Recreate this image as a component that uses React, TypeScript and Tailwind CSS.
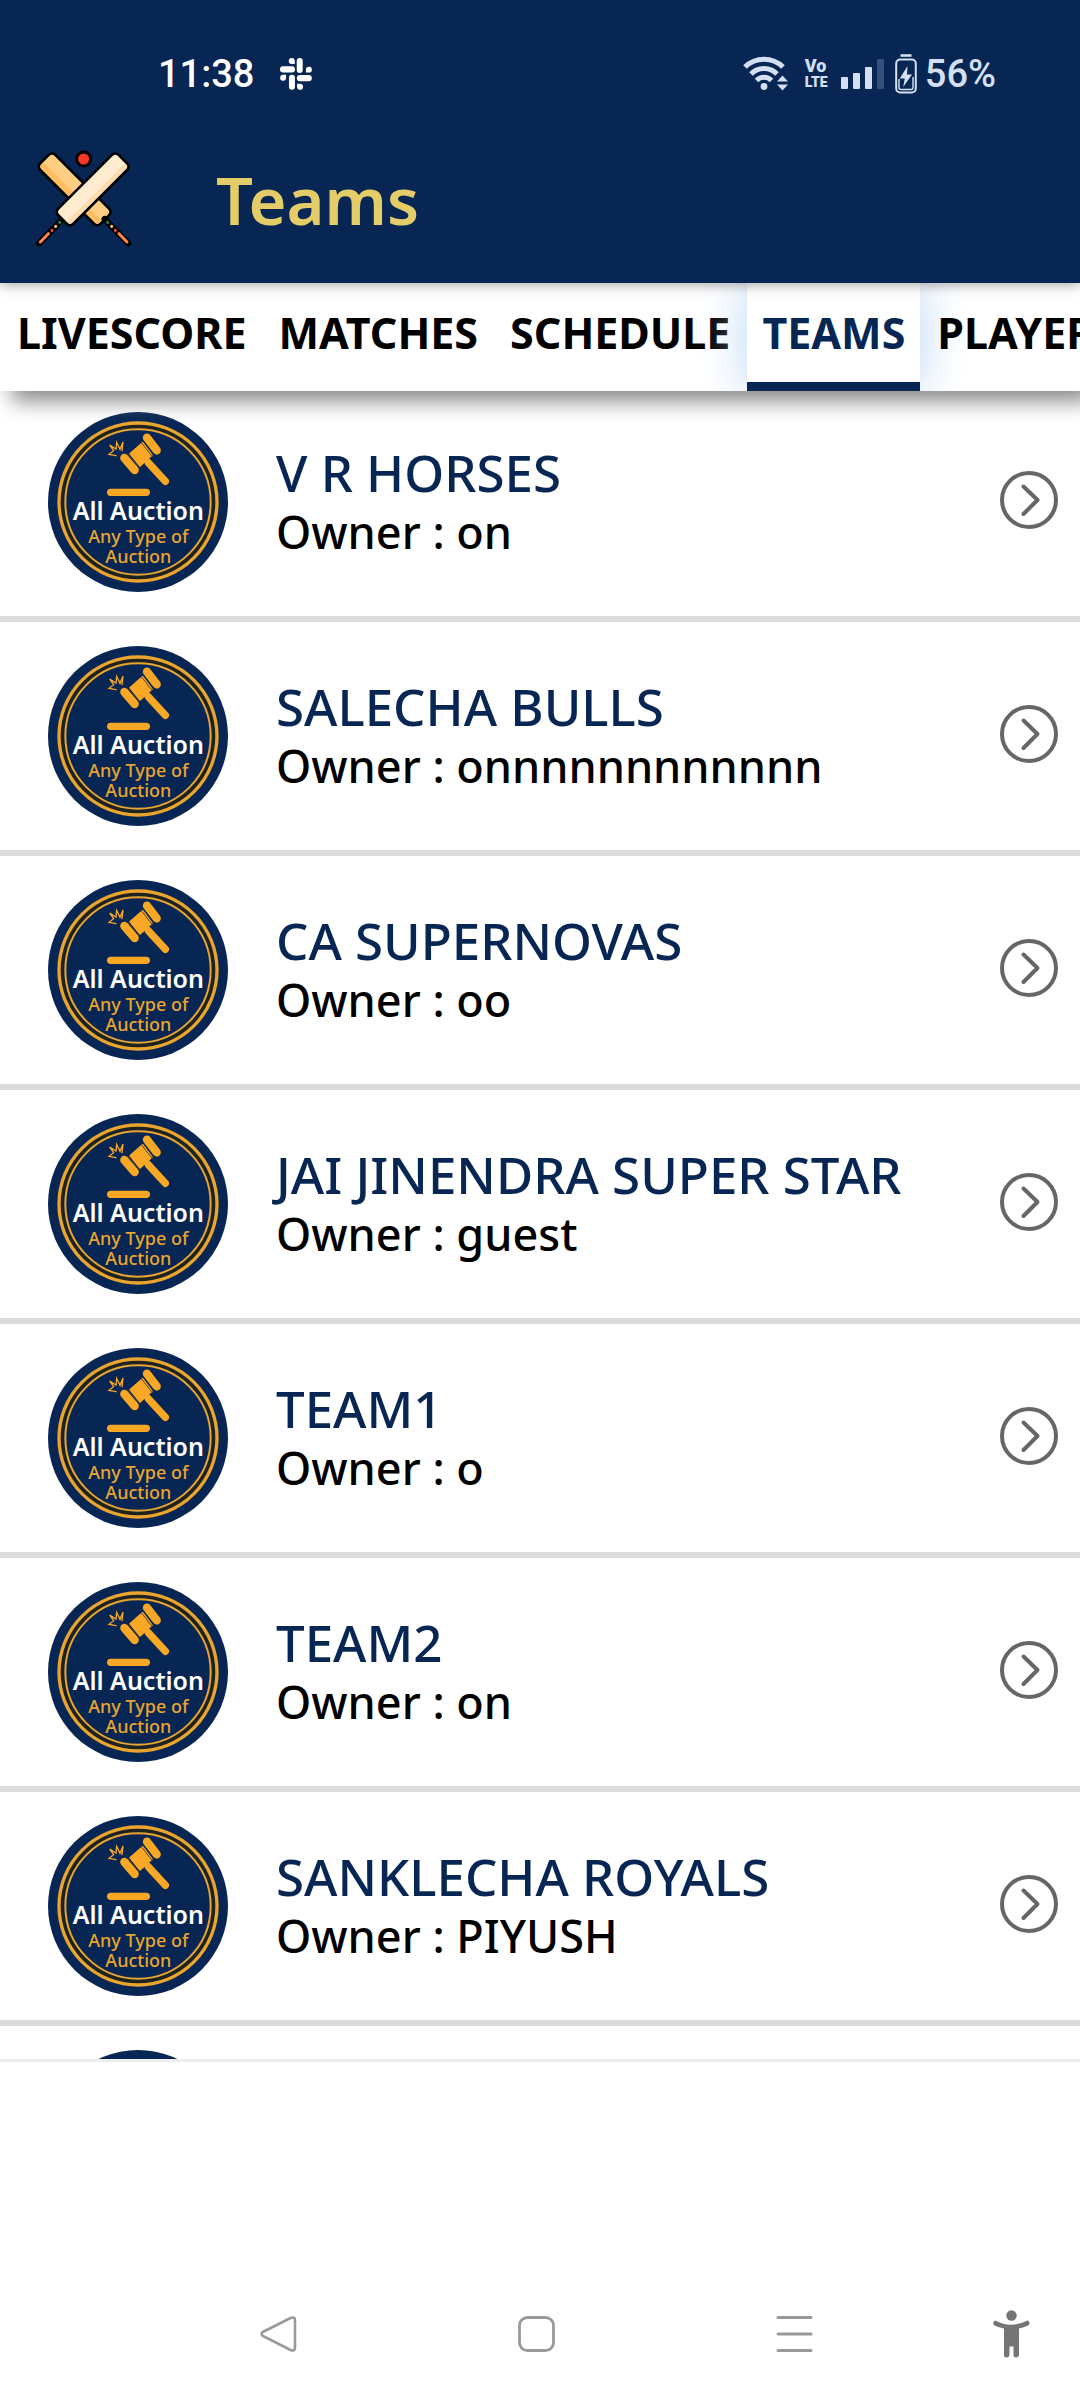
import { useState } from "react";

const TABS = ["LIVESCORE", "MATCHES", "SCHEDULE", "TEAMS", "PLAYERS"];

const TEAMS = [
  { name: "V R HORSES", owner: "on" },
  { name: "SALECHA BULLS", owner: "onnnnnnnnnnnn" },
  { name: "CA SUPERNOVAS", owner: "oo" },
  { name: "JAI JINENDRA SUPER STAR", owner: "guest" },
  { name: "TEAM1", owner: "o" },
  { name: "TEAM2", owner: "on" },
  { name: "SANKLECHA ROYALS", owner: "PIYUSH" },
  { name: "TEAM3", owner: "on" },
];

function StatusBar() {
  return (
    <div className="flex h-[148px] items-center pl-[158px] pr-[84px] font-['Roboto',sans-serif] text-[38px] leading-none font-medium text-[#d4e0f2]">
      <span className="text-white">11:38</span>
      <svg className="ml-[26px]" width="32" height="32" viewBox="0 0 30 30" fill="#fff">
        <rect x="15.7" y="0" width="5.6" height="14" rx="2.8" />
        <path d="M13.8 5.6H11a2.8 2.8 0 1 1 2.8-2.8z" />
        <rect x="0" y="7.8" width="14" height="5.8" rx="2.8" />
        <path d="M24.3 13.7v-3a2.8 2.8 0 1 1 2.8 3z" />
        <rect x="15.8" y="16" width="14" height="5.8" rx="2.8" />
        <path d="M5.7 15.8v3a2.8 2.8 0 1 1-2.8-3z" />
        <rect x="8.4" y="15.8" width="5.6" height="14" rx="2.8" />
        <path d="M16 24.2h3a2.8 2.8 0 1 1-3 2.8z" />
      </svg>
      <svg className="ml-auto" width="46" height="36" viewBox="0 0 46 36" fill="none" stroke="#d4e0f2">
        <path d="M2 11a27 27 0 0 1 38 0" strokeWidth="5" />
        <path d="M8 18a18 18 0 0 1 26 0" strokeWidth="5" />
        <path d="M13.5 24.5a10.5 10.5 0 0 1 15 0" strokeWidth="5" />
        <circle cx="21" cy="30.5" r="3.4" fill="#d4e0f2" stroke="none" />
        <path d="M34 25.5h11l-5.5-6zM34 28.5h11l-5.5 6z" fill="#d4e0f2" stroke="none" />
      </svg>
      <span className="ml-4 flex w-6 flex-col text-[18px] leading-4 font-black">
        <span>Vo</span>
        <span className="text-[14px]">LTE</span>
      </span>
      <svg className="ml-3" width="44" height="32" viewBox="0 0 44 32" fill="#d4e0f2">
        <rect x="0" y="19" width="7" height="12" rx="1" />
        <rect x="12" y="15" width="7" height="16" rx="1" />
        <rect x="24" y="9" width="7" height="22" rx="1" />
        <rect x="36" y="1" width="7" height="30" rx="1" fill="#34507f" />
      </svg>
      <svg className="ml-[10px]" width="22" height="40" viewBox="0 0 22 40" fill="none" stroke="#d4e0f2" strokeWidth="2">
        <path d="M5.5 1.5h11" strokeWidth="2.6" />
        <rect x="1.2" y="5.5" width="19.6" height="33" rx="4" />
        <path d="M4 25v8.5q0 2 2 2h10q2 0 2-2V23" strokeWidth="1.4" />
        <path d="M12.5 12 4.8 24.5h5L8.2 33 17 20.5h-5z" fill="#d4e0f2" stroke="none" />
      </svg>
      <span className="ml-2">56%</span>
    </div>
  );
}

function CricketLogo() {
  return (
    <svg className="mb-1" width="97" height="97" viewBox="46 61 291 291" stroke="#000" strokeWidth="8" strokeLinecap="round">
      <g transform="translate(165 179) rotate(-45)">
        <rect x="-32" y="-128" width="64" height="256" rx="14" fill="#ffd083" />
        <path d="M-27-114v226q0 11 10 11h8V-122h-8q-10 0-10 8z" fill="#ffbd62" stroke="none" />
      </g>
      <path d="m255 268 71 73" strokeWidth="19" />
      <path d="m298 312 24 25" stroke="#ff8354" strokeWidth="9" />
      <path d="m287 302 .1.1" stroke="#f44a3e" strokeWidth="9" />
      <path d="m276 290 .1.1" stroke="#ffc96b" strokeWidth="9" />
      <path d="m264 278 .1.1" stroke="#16875b" strokeWidth="9" />
      <path d="m129 268-71 73" strokeWidth="19" />
      <path d="m86 312-24 25" stroke="#ff8354" strokeWidth="9" />
      <path d="m97 302-.1.1" stroke="#f44a3e" strokeWidth="9" />
      <path d="m108 290-.1.1" stroke="#ffc96b" strokeWidth="9" />
      <path d="m120 278-.1.1" stroke="#16875b" strokeWidth="9" />
      <g transform="translate(219 179) rotate(45)">
        <rect x="-32" y="-128" width="64" height="256" rx="14" fill="#ffebcf" />
        <path d="M27-114v226q0 11-10 11h-3V-122h3q10 0 10 8z" fill="#ffdbae" stroke="none" />
      </g>
      <circle cx="192" cy="88" r="21" fill="#fa3728" strokeWidth="9" />
    </svg>
  );
}

function TeamBadge() {
  return (
    <svg className="size-[180px] shrink-0" viewBox="54 36 540 540" fontFamily="'Noto Sans', sans-serif" textAnchor="middle">
      <circle cx="324" cy="306" r="270" fill="#072654" />
      <circle cx="324" cy="306" r="231" fill="none" stroke="#1e231f" strokeWidth="20" />
      <circle cx="324" cy="306" r="237" fill="none" stroke="#e9a52f" strokeWidth="10" />
      <circle cx="324" cy="306" r="218" fill="none" stroke="#e9a52f" strokeWidth="6" />
      <g stroke="#f9a826" strokeLinecap="round">
        <path d="M355 188 406 244" strokeWidth="22" />
        <path d="m283 174 31 36M351 113l29 38" strokeWidth="25" />
        <path d="m338 129 27 36-35 32-29-36z" fill="#f9a826" strokeWidth="6" strokeLinejoin="round" />
        <path d="M242 277h107" strokeWidth="22" />
        <path d="m258 167-21-4 14-11-12-17 19 12 2-20 10 21 9-22-3 26" fill="none" strokeWidth="4" />
      </g>
      <path d="m293 163 33 40M334 128l33 42" stroke="#5c4523" strokeWidth="3" />
      <text x="325" y="360" fontSize="75" fontWeight="600" fill="#fff">All Auction</text>
      <text x="325" y="428" fontSize="54" fontWeight="500" fill="#e9a52f">Any Type of</text>
      <text x="325" y="490" fontSize="54" fontWeight="500" fill="#e9a52f">Auction</text>
    </svg>
  );
}

function TeamRow({ name, owner }: { name: string; owner: string }) {
  return (
    <li className="border-b-[6px] border-[#dcdcdc]">
      <a href="#team" className="flex items-center pt-6 pr-[22px] pb-6 pl-12">
        <TeamBadge />
        <div className="ml-12 min-w-0 flex-1">
          <h2 className="text-[51px] leading-[60px] font-medium text-[#072654]">{name}</h2>
          <p className="text-[45px] leading-[60px] font-medium text-black">Owner : {owner}</p>
        </div>
        <svg className="mb-1 shrink-0" width="58" height="58" viewBox="0 0 58 58" fill="none" stroke="#666" strokeWidth="4">
          <circle cx="29" cy="29" r="27" />
          <path d="m23.5 15.5 14 13.5-14 14" strokeLinecap="round" strokeLinejoin="round" />
        </svg>
      </a>
    </li>
  );
}

export default function App() {
  const [active, setActive] = useState("TEAMS");

  return (
    <div className="flex h-screen flex-col overflow-hidden bg-white font-['Noto_Sans',sans-serif]">
      <header className="relative z-20 h-[283px] shrink-0 bg-[#072654] shadow-[0_2px_12px_rgba(0,0,0,0.35)]">
        <StatusBar />
        <div className="flex items-center pl-[35px]">
          <CricketLogo />
          <h1 className="ml-[84px] text-[65px] leading-[104px] font-semibold text-[#e4cd69]">Teams</h1>
        </div>
      </header>

      <nav className="relative z-10 shrink-0 bg-white shadow-[12px_10px_20px_#888]">
        <div className="flex h-[108px] gap-[2px] overflow-x-auto overflow-y-hidden pl-[2px] [scrollbar-width:none]">
          {TABS.map((tab) => (
            <button
              key={tab}
              onClick={() => setActive(tab)}
              className={
                active === tab
                  ? "shrink-0 border-b-[9px] border-[#072654] px-[15px] text-[43px] leading-none font-bold text-[#072654] shadow-[0_0_50px_#b9d6f5]"
                  : "shrink-0 border-b-[9px] border-transparent px-[15px] text-[43px] leading-none font-bold text-black"
              }
            >
              {tab}
            </button>
          ))}
        </div>
      </nav>

      <main className="-mt-[3px] min-h-0 flex-1 overflow-y-auto [scrollbar-width:none]">
        <ul>
          {TEAMS.map((team) => (
            <TeamRow key={team.name} name={team.name} owner={team.owner} />
          ))}
        </ul>
      </main>

      <div className="h-[209px] shrink-0 border-t-[3px] border-[#eee]" />

      <footer className="flex h-[132px] shrink-0 items-center pr-[50px] pl-[260px]">
        <div className="flex flex-1 justify-between">
          <button aria-label="Back">
            <svg width="37" height="36" viewBox="0 0 37 36" fill="none" stroke="#999" strokeWidth="2.6">
              <path d="M2.8 16 30.5 2Q35 .5 35 4v28q0 3.5-4.5 2L2.8 20Q.5 18 2.8 16z" />
            </svg>
          </button>
          <button aria-label="Home">
            <svg width="37" height="36" viewBox="0 0 37 36" fill="none" stroke="#999" strokeWidth="2.8">
              <rect x="1.5" y="1.5" width="34" height="33" rx="8" />
            </svg>
          </button>
          <button aria-label="Recent apps">
            <svg width="37" height="36" viewBox="0 0 37 36" stroke="#999" strokeWidth="3" strokeLinecap="round">
              <path d="M2 1.5h33M2 18h33M2 34.5h33" />
            </svg>
          </button>
        </div>
        <button aria-label="Accessibility" className="ml-[180px]">
          <svg width="37" height="48" viewBox="0 0 37 48" fill="#757575">
            <circle cx="18.5" cy="5.5" r="5.2" />
            <path d="M2.2 10.5Q18 19 34.5 10.5q2 .5 2 2.5t-1.5 2.5Q31 17.5 26 18.5V45q-.5 2.5-3 2.5T20.5 45v-8.5h-4V45q-.5 2.5-3 2.5T11 45V18.5Q6 17.5 1.5 15.5 0 14.5.5 12.5t1.7-2z" />
          </svg>
        </button>
      </footer>
    </div>
  );
}
